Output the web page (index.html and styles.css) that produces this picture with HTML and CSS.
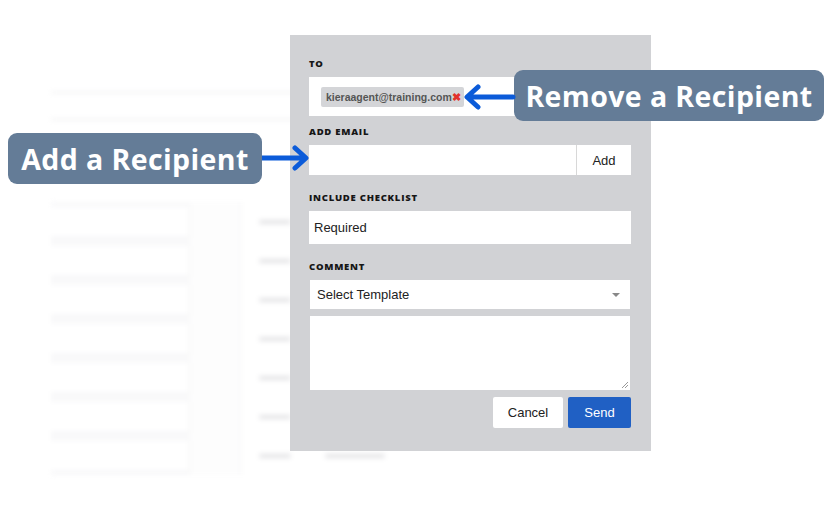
FILE: index.html
```html
<!DOCTYPE html>
<html lang="en">
<head>
    <meta charset="UTF-8">
    <meta name="viewport" content="width=device-width, initial-scale=1.0">
    <title>Send Checklist</title>
    <link rel="stylesheet" href="styles.css">
</head>
<body>
    <div class="stage">
        <!-- blurred page behind the modal -->
        <div class="backdrop">
            <div class="bg-line"></div>
            <div class="bg-line second"></div>
            <div class="bg-rows">
                <div class="bg-row"><div class="bg-note"></div><div class="bg-gap"></div><div class="bg-cell"><span class="bg-text"></span></div></div>
                <div class="bg-row"><div class="bg-note"></div><div class="bg-gap"></div><div class="bg-cell"><span class="bg-text"></span></div></div>
                <div class="bg-row"><div class="bg-note"></div><div class="bg-gap"></div><div class="bg-cell"><span class="bg-text"></span></div></div>
                <div class="bg-row"><div class="bg-note"></div><div class="bg-gap"></div><div class="bg-cell"><span class="bg-text"></span></div></div>
                <div class="bg-row"><div class="bg-note"></div><div class="bg-gap"></div><div class="bg-cell"><span class="bg-text"></span></div></div>
                <div class="bg-row"><div class="bg-note"></div><div class="bg-gap"></div><div class="bg-cell"><span class="bg-text"></span></div></div>
                <div class="bg-row"><div class="bg-note"></div><div class="bg-gap"></div><div class="bg-cell"><span class="bg-text"></span><span class="bg-text wide"></span></div></div>
            </div>
        </div>

        <div class="modal">
            <div class="label">TO</div>
            <div class="to-box">
                <span class="chip">kieraagent@training.com<span class="chip-x">✖</span></span>
            </div>

            <div class="label gap-s">ADD EMAIL</div>
            <div class="add-row">
                <div class="add-input"></div>
                <button class="add-btn">Add</button>
            </div>

            <div class="label gap-l">INCLUDE CHECKLIST</div>
            <div class="field">Required</div>

            <div class="label gap-l">COMMENT</div>
            <div class="select">
                <span>Select Template</span>
                <span class="caret"></span>
            </div>
            <div class="textarea">
                <svg class="grip" width="8" height="8" viewBox="0 0 8 8">
                    <path d="M7 1 L1 7 M7 4 L4 7" stroke="#999" stroke-width="1"/>
                </svg>
            </div>

            <div class="actions">
                <button class="btn cancel">Cancel</button>
                <button class="btn send">Send</button>
            </div>
        </div>

        <!-- callouts -->
        <div class="callout remove">Remove a Recipient</div>
        <div class="callout add">Add a Recipient</div>

        <svg class="arrow arrow-remove" width="54" height="30" viewBox="0 0 54 30">
            <path d="M51 15 L6 15 M16 5 L5 15 L16 25" fill="none" stroke="#0b5bd9" stroke-width="5" stroke-linecap="round" stroke-linejoin="round"/>
        </svg>
        <svg class="arrow arrow-add" width="50" height="30" viewBox="0 0 50 30">
            <path d="M0 15 L43 15 M33 5 L44 15 L33 25" fill="none" stroke="#0b5bd9" stroke-width="5" stroke-linecap="round" stroke-linejoin="round"/>
        </svg>
    </div>
</body>
</html>
```

FILE: styles.css
```css
body {
    margin: 0;
    background-color: #fff;
    font-family: "Liberation Sans", Arial, sans-serif;
}

.stage {
    position: relative;
    width: 828px;
    height: 509px;
    overflow: hidden;
}

/* background page */
.backdrop {
    padding: 92px 0 0 51px;
    width: 520px;
    filter: blur(2.5px);
}

.bg-line {
    height: 1px;
    background-color: #e4e5e7;
    width: 400px;
}

.bg-line.second {
    margin-top: 26px;
}

.bg-rows {
    margin-top: 82px;
    background-color: #f9f9fa;
}

.bg-row {
    display: flex;
    height: 39px;
}

.bg-note {
    width: 138px;
    border-right: 1px solid #efeff1;
    border-bottom: 1px solid #f0f0f2;
    background-color: #fff;
    margin: 5px 0 3px;
}

.bg-gap {
    width: 50px;
    border-right: 1px solid #f3f3f5;
    background-color: #fdfdfd;
}

.bg-cell {
    flex: 1;
    display: flex;
    align-items: center;
    gap: 14px;
    padding-left: 18px;
    background-color: #fff;
}

.bg-text {
    display: inline-block;
    width: 32px;
    height: 4px;
    background-color: #e3e3e5;
    border-radius: 2px;
}

.bg-text.wide {
    width: 60px;
    margin-left: 20px;
}

/* modal */
.modal {
    position: absolute;
    left: 290px;
    top: 35px;
    width: 322px;
    height: 374px;
    padding: 23px 20px 19px 19px;
    background-color: #d1d2d5;
}

.label {
    font-family: "Open Sans", sans-serif;
    font-size: 9.5px;
    font-weight: 800;
    letter-spacing: 0.75px;
    color: #161616;
    line-height: 11px;
    margin-bottom: 8px;
}

.label.gap-s {
    margin-top: 10px;
}

.label.gap-l {
    margin-top: 17px;
}

.to-box {
    height: 39px;
    background-color: #fff;
    display: flex;
    align-items: center;
    padding-left: 12px;
    box-sizing: border-box;
}

.chip {
    display: inline-flex;
    align-items: center;
    height: 20px;
    padding: 0 3px 0 5px;
    background-color: #d4d5d8;
    border-radius: 2px;
    font-size: 10.5px;
    font-weight: bold;
    color: #555;
}

.chip-x {
    color: #e2312c;
    font-size: 10.5px;
    margin-left: 0;
}

.add-row {
    display: flex;
    height: 30px;
}

.add-input {
    flex: 1;
    background-color: #fff;
    border-right: 1px solid #d8d8d8;
}

.add-btn {
    width: 54px;
    border: none;
    background-color: #fff;
    font-family: "Liberation Sans", Arial, sans-serif;
    font-size: 13px;
    color: #222;
    padding: 0;
}

.field {
    height: 33px;
    background-color: #fff;
    display: flex;
    align-items: center;
    padding-left: 5px;
    font-size: 13px;
    color: #222;
}

.select {
    height: 29px;
    margin: 1px 1px 0;
    background-color: #fff;
    display: flex;
    align-items: center;
    justify-content: space-between;
    padding: 0 10px 0 7px;
    font-size: 13px;
    color: #222;
}

.caret {
    width: 0;
    height: 0;
    border-left: 4px solid transparent;
    border-right: 4px solid transparent;
    border-top: 4px solid #888;
}

.textarea {
    position: relative;
    height: 74px;
    margin: 7px 1px 0;
    background-color: #fff;
}

.grip {
    position: absolute;
    right: 1px;
    bottom: 1px;
}

.actions {
    display: flex;
    justify-content: flex-end;
    gap: 5px;
    margin-top: 7px;
}

.btn {
    height: 31px;
    border: none;
    border-radius: 2px;
    font-family: "Liberation Sans", Arial, sans-serif;
    font-size: 13px;
    padding: 0;
}

.cancel {
    width: 70px;
    background-color: #fff;
    color: #222;
}

.send {
    width: 63px;
    background-color: #2060c4;
    color: #fff;
}

/* callouts */
.callout {
    position: absolute;
    display: flex;
    align-items: center;
    justify-content: center;
    height: 51px;
    background-color: #647c97;
    border-radius: 9px;
    color: #fff;
    font-family: "Open Sans", sans-serif;
    font-weight: 700;
    font-size: 28.5px;
    letter-spacing: 0.4px;
}

.callout.remove {
    left: 514px;
    top: 70px;
    width: 310px;
}

.callout.add {
    left: 8px;
    top: 133px;
    width: 254px;
}

.arrow {
    position: absolute;
}

.arrow-remove {
    left: 462px;
    top: 82px;
}

.arrow-add {
    left: 262px;
    top: 143px;
}
```
